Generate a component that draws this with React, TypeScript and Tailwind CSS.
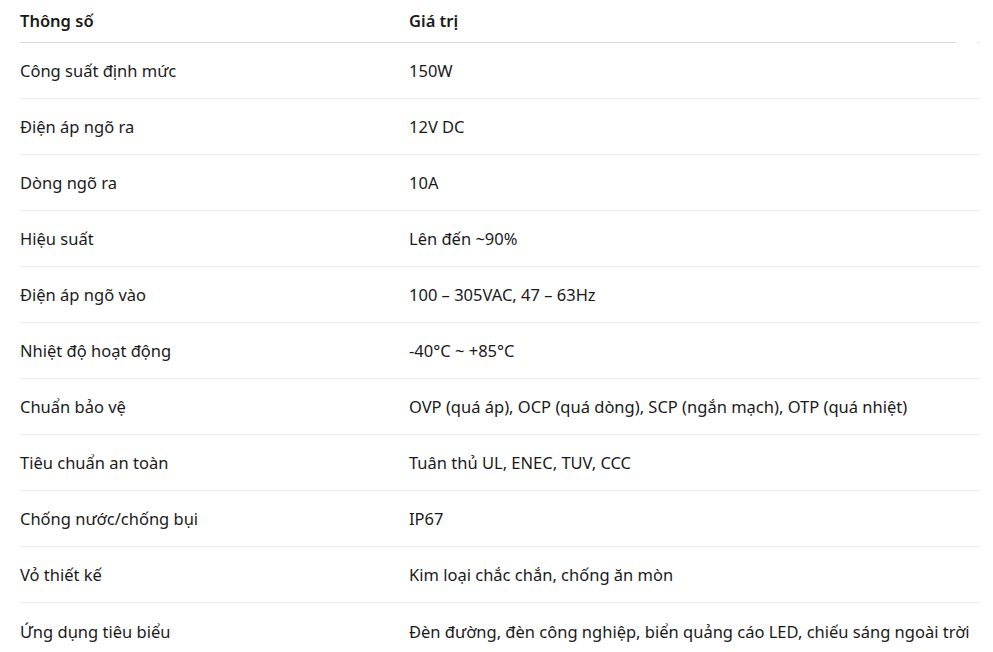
import React from 'react';

const rows: [string, string][] = [
    ['Công suất định mức', '150W'],
    ['Điện áp ngõ ra', '12V DC'],
    ['Dòng ngõ ra', '10A'],
    ['Hiệu suất', 'Lên đến ~90%'],
    ['Điện áp ngõ vào', '100 – 305VAC, 47 – 63Hz'],
    ['Nhiệt độ hoạt động', '-40°C ~ +85°C'],
    ['Chuẩn bảo vệ', 'OVP (quá áp), OCP (quá dòng), SCP (ngắn mạch), OTP (quá nhiệt)'],
    ['Tiêu chuẩn an toàn', 'Tuân thủ UL, ENEC, TUV, CCC'],
    ['Chống nước/chống bụi', 'IP67'],
    ['Vỏ thiết kế', 'Kim loại chắc chắn, chống ăn mòn'],
    ['Ứng dụng tiêu biểu', 'Đèn đường, đèn công nghiệp, biển quảng cáo LED, chiếu sáng ngoài trời'],
];

export default function App() {
    return (
        <div className="min-h-screen bg-white pl-5 pr-[13px] text-[16.5px] text-[#1a1a1a] font-['Segoe_UI','Noto_Sans',sans-serif]">
            {/* Header */}
            <div className="flex h-[42px] items-center font-semibold">
                <div className="w-[389px]">Thông số</div>
                <div>Giá trị</div>
            </div>
            <div className="flex">
                <div className="h-px w-[936px] bg-[#d9d9d9]" />
                <div className="flex-1" />
                <div className="h-px w-[3px] bg-[#e5e5e5]" />
            </div>

            {/* Rows */}
            {rows.map(([name, value], i) => (
                <div
                    key={i}
                    className={`flex h-[56px] items-center pt-[2px] ${i < rows.length - 1 ? 'border-b border-[#ededed]' : ''}`}
                >
                    <div className="w-[389px] shrink-0">{name}</div>
                    <div className="whitespace-nowrap">{value}</div>
                </div>
            ))}
        </div>
    );
}
